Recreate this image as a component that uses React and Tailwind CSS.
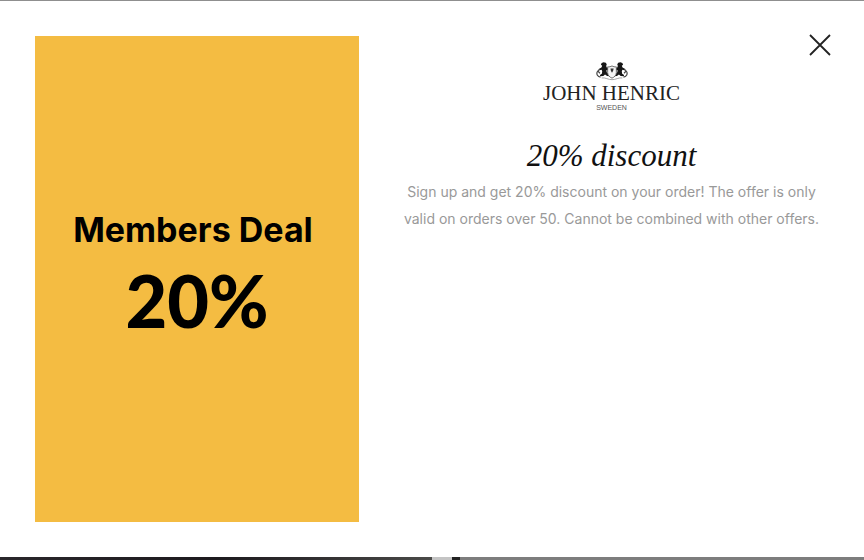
import React from 'react';

const Crest = () => (
  <svg viewBox="0 0 34 20" className="h-5 w-8" fill="none" aria-hidden="true">
    {/* left lion */}
    <g id="lion" fill="#161616">
      <path d="M6 1.4 8 .6l2.4.6 1 1.6-.6 1.8.6 1.6 2 1.2-.2 1.6-2.2.2.4 2 2 2 1.6 1-.2 1.4-3-.2-2.2-1.8-1.8 1.6-3.4.4-.2-1.4 2-1.2.4-2.6L6 8.6l-2.4.6-.6-1.4 2.8-1.6.8-1.8-1.4-1z" />
      <path d="M4.8 16.4C1.6 16 .4 13.4 1.2 11.2c.6-1.6 2-2 2.6-3.2M1.6 9.6l2.6 2.8" fill="none" stroke="#444" strokeWidth="1.3" />
    </g>
    <use href="#lion" transform="matrix(-1 0 0 1 34 0)" />
    {/* shield */}
    <path d="M12.4 5.6c1.8.2 3.2-.2 4.6-1 1.4.8 2.8 1.2 4.6 1v6.2c0 2.8-2 4.6-4.6 5.8-2.6-1.2-4.6-3-4.6-5.8z" fill="#f5f5f5" stroke="#555" strokeWidth=".9" />
    <path d="M15.4 7.4h3.4l-.6 2.4-1.2 2-1.2-2z" fill="#333" />
    <path d="M6 17.4c3.6-.8 7.2 2 11 1.8 3.8.2 7.4-2.6 11-1.8" stroke="#888" strokeWidth=".8" />
  </svg>
);

const Logo = () => (
  <div className="flex flex-col items-center text-[#222]">
    <Crest />
    <div className="mt-px font-['Liberation_Serif',serif] text-[21px] leading-[22px]">JOHN HENRIC</div>
    <div className="font-['Liberation_Sans',sans-serif] text-[7px] leading-2 text-[#555]">SWEDEN</div>
  </div>
);

const App = () => {
  return (
    <div className="flex min-h-screen flex-col bg-white">
      <div className="h-px bg-[#8f8f8f]" />

      <main className="flex grow">
        <section className="my-[35px] ml-[35px] flex w-3/8 shrink-0 flex-col items-center bg-[#f4bc42] pt-[172px] text-black">
          <h2 className="pr-2 font-['Inter',sans-serif] text-[34px] leading-[44px] font-bold">Members Deal</h2>
          <p className="mt-3 font-['Lato',sans-serif] text-[72px] leading-[72px] font-black">20%</p>
        </section>

        <section className="flex grow flex-col items-center px-8 pt-8">
          <button type="button" aria-label="Close" className="self-end text-[#222]">
            <svg viewBox="0 0 24 24" className="h-6 w-6" fill="none" stroke="currentColor" strokeWidth="1.8">
              <path d="M2 2l20 20M22 2L2 22" />
            </svg>
          </button>
          <div className="mt-1">
            <Logo />
          </div>
          <h1 className="mt-6 font-['Liberation_Serif',serif] text-[31px] leading-[40px] text-[#111] italic">20% discount</h1>
          <p className="mt-0.5 max-w-[430px] text-center font-['Inter',sans-serif] text-[14px] leading-[27px] text-[#999]">
            Sign up and get 20% discount on your order! The offer is only valid on orders over 50. Cannot be combined with other offers.
          </p>
        </section>
      </main>

      {/* page behind the dialog */}
      <div className="flex h-[3px]">
        <div className="w-1/2 bg-gradient-to-r from-[#2a272b] via-[#1d1a1e] to-[#4a4a48]" />
        <div className="w-5 bg-[#c4c4c4]" />
        <div className="w-2 bg-[#222]" />
        <div className="grow bg-[#7d7d7d]" />
      </div>
    </div>
  );
};

export default App;
